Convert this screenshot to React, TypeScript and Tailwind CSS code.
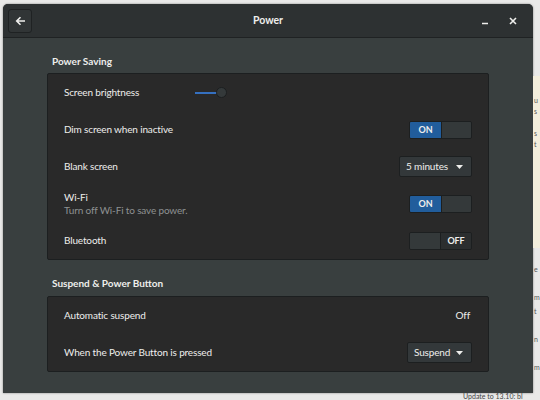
import React from "react";

const font = { fontFamily: "Lato, 'Liberation Sans', sans-serif" };

function Switch({ on }: { on: boolean }) {
  return (
    <div className="flex h-[18px] w-[63px] rounded-[2px] border border-[#1c1f20] overflow-hidden text-[9px] font-bold text-[#eeeeec]">
      {on ? (
        <>
          <div className="flex w-[31px] items-center justify-center bg-[#215d9c]">ON</div>
          <div className="flex-1 bg-[#34393a] border-l border-[#1c1f20]" />
        </>
      ) : (
        <>
          <div className="w-[31px] bg-[#34393a] border-r border-[#1c1f20]" />
          <div className="flex flex-1 items-center justify-center bg-[#2b2e2f]">OFF</div>
        </>
      )}
    </div>
  );
}

function Combo({ label, w }: { label: string; w: string }) {
  return (
    <div className={`flex h-[21px] ${w} items-center justify-between rounded-[2px] border border-[#1c1f20] bg-[#33383a] pl-[6px] pr-[8px] text-[10px] text-[#eeeeec]`}>
      <span>{label}</span>
      <svg width="7" height="4" viewBox="0 0 7 4">
        <path d="M0 0 H7 L3.5 4 Z" fill="#eeeeec" />
      </svg>
    </div>
  );
}

function Row({ children }: { children: React.ReactNode }) {
  return (
    <div className="flex h-[37px] items-center justify-between pl-[16px] pr-[16px]">
      {children}
    </div>
  );
}

export default function App() {
  return (
    <div className="relative h-[400px] w-[540px] overflow-hidden bg-[#e9e9e8]" style={font}>
      {/* desktop fragments behind window */}
      <div className="absolute right-0 top-[76px] h-[172px] w-[7px] bg-[#f3eedc]" />
      <div className="absolute left-[534px] top-[95px] text-[7px] leading-[11px] text-[#555]">
        u<br />s<br /><br />s<br />t
      </div>
      <div className="absolute left-[534px] top-[262px] text-[7px] leading-[14px] text-[#555]">
        e<br /><br />m<br />t<br /><br />n<br /><br />m
      </div>
      <div className="absolute left-[463px] top-[392px] text-[7px] leading-[8px] text-[#444]">Update to 13.10: bl</div>

      <div className="ml-[3px] mt-[4px] flex h-[389px] w-[530px] flex-col overflow-hidden rounded-t-[5px] bg-[#393f3f] shadow-[0_0_2px_rgba(0,0,0,0.5)]">
        {/* header */}
        <div className="grid h-[34px] grid-cols-[1fr_auto_1fr] items-center border-b border-[#1f2223] bg-[#2d3132] px-[5px]">
          <div className="flex">
            <div className="flex h-[24px] w-[24px] items-center justify-center rounded-[3px] border border-[#1f2223] bg-[#313536]">
              <svg width="11" height="10" viewBox="0 0 11 10">
                <path d="M10 5 H2 M5.5 1.2 L1.7 5 L5.5 8.8" stroke="#eeeeec" strokeWidth="1.6" fill="none" />
              </svg>
            </div>
          </div>
          <div className="text-center text-[10.5px] font-bold text-[#eeeeec]">Power</div>
          <div className="flex items-center justify-end gap-[20px] pr-[11px]">
            <svg width="8" height="8" viewBox="0 0 8 8">
              <path d="M1 6.5 H7" stroke="#eeeeec" strokeWidth="1.6" />
            </svg>
            <svg width="8" height="8" viewBox="0 0 8 8">
              <path d="M1 1 L7 7 M7 1 L1 7" stroke="#eeeeec" strokeWidth="1.6" />
            </svg>
          </div>
        </div>

        {/* content */}
        <div className="flex flex-col px-[44px] pt-[16px] text-[10px] tracking-[-0.15px] text-[#eeeeec]">
          <div className="pl-[5px] text-[10px] font-bold leading-[14px] tracking-normal">Power Saving</div>
          <div className="mt-[5px] rounded-[2px] border border-[#1c1f20] bg-[#292929]">
            <Row>
              <div className="flex items-center">
                <span className="w-[131px]">Screen brightness</span>
                <div className="flex items-center">
                  <div className="h-[2px] w-[22px] bg-[#3570c0]" />
                  <div className="-ml-[1px] h-[11px] w-[11px] rounded-full border border-[#1c1f20] bg-[#34393a]" />
                </div>
              </div>
            </Row>
            <Row>
              <span>Dim screen when inactive</span>
              <Switch on />
            </Row>
            <Row>
              <span>Blank screen</span>
              <Combo label="5 minutes" w="w-[73px]" />
            </Row>
            <Row>
              <div className="flex flex-col leading-[13px]">
                <span>Wi-Fi</span>
                <span className="text-[#8e9192]">Turn off Wi-Fi to save power.</span>
              </div>
              <Switch on />
            </Row>
            <Row>
              <span>Bluetooth</span>
              <Switch on={false} />
            </Row>
          </div>

          <div className="mt-[16px] pl-[5px] text-[10px] font-bold leading-[14px] tracking-normal">Suspend &amp; Power Button</div>
          <div className="mt-[6px] rounded-[2px] border border-[#1c1f20] bg-[#292929]">
            <Row>
              <span>Automatic suspend</span>
              <span className="pr-[2px]">Off</span>
            </Row>
            <Row>
              <span>When the Power Button is pressed</span>
              <Combo label="Suspend" w="w-[65px]" />
            </Row>
          </div>
        </div>
      </div>
    </div>
  );
}
